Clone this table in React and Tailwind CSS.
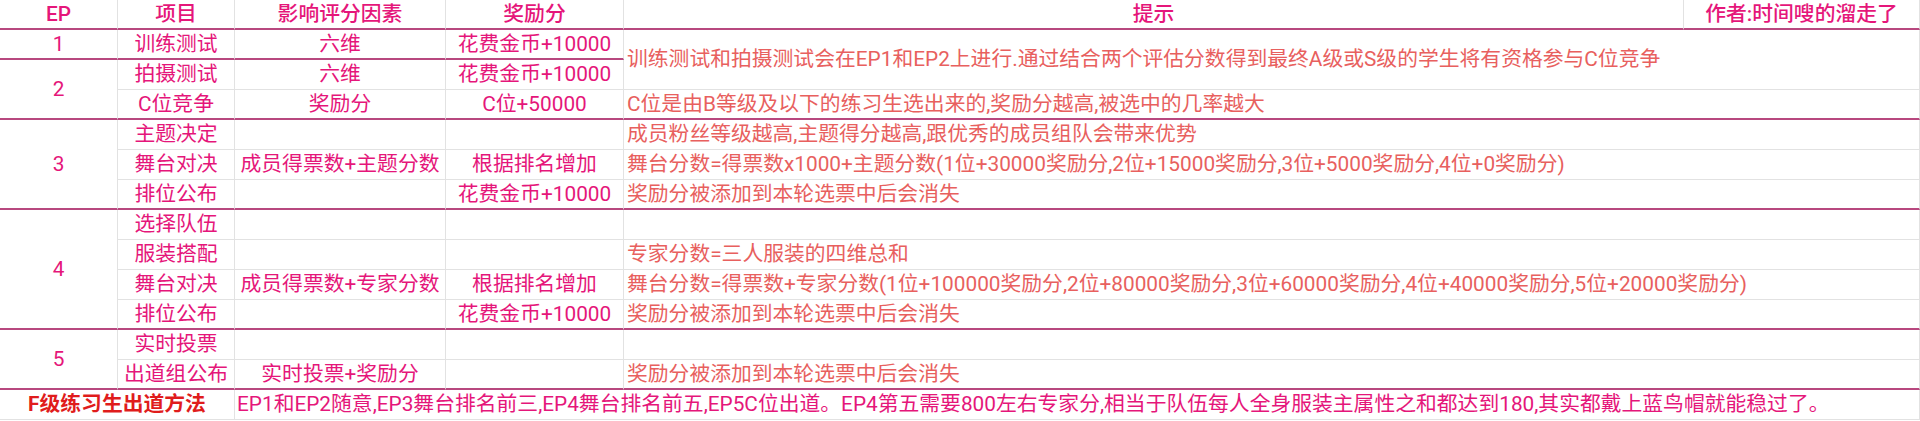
import React from "react";
import clsx from "clsx";

// 颜色
const PINK = "text-[#e5167a]";
const SALMON = "text-[#e8605e]";
const THICK = "border-b-2 border-b-[#b8487f]";

function Cell({ className, children }) {
  return (
    <div
      className={clsx(
        "flex items-center justify-center whitespace-nowrap border-r border-b border-[#e2e2e2] leading-none",
        className
      )}
    >
      {children}
    </div>
  );
}

// 提示列：左对齐，跨到最后一列
function Hint({ className, children }) {
  return (
    <Cell className={clsx("col-start-5 col-span-2 justify-start pl-[3px]", SALMON, className)}>
      {children}
    </Cell>
  );
}

export default function App() {
  return (
    <div className="w-[1920px] h-[421px] bg-white overflow-hidden font-[Roboto,'Noto_Sans_CJK_SC',sans-serif] text-[20.8px]">
      <div className={clsx("grid grid-cols-[118px_117px_211px_178px_1060px_236px] grid-rows-[repeat(14,30px)]", PINK)}>
        {/* 表头 */}
        <Cell className={clsx("col-start-1 row-start-1 font-medium", THICK)}>EP</Cell>
        <Cell className={clsx("col-start-2 row-start-1 font-medium", THICK)}>项目</Cell>
        <Cell className={clsx("col-start-3 row-start-1 font-medium", THICK)}>影响评分因素</Cell>
        <Cell className={clsx("col-start-4 row-start-1 font-medium", THICK)}>奖励分</Cell>
        <Cell className={clsx("col-start-5 row-start-1 font-medium", THICK)}>提示</Cell>
        <Cell className={clsx("col-start-6 row-start-1 font-medium", THICK)}>作者:时间嗖的溜走了</Cell>

        {/* EP1 */}
        <Cell className={clsx("col-start-1 row-start-2", THICK)}>1</Cell>
        <Cell className={clsx("col-start-2 row-start-2", THICK)}>训练测试</Cell>
        <Cell className={clsx("col-start-3 row-start-2", THICK)}>六维</Cell>
        <Cell className={clsx("col-start-4 row-start-2", THICK)}>花费金币+10000</Cell>
        <Hint className="row-start-2 row-span-2">
          训练测试和拍摄测试会在EP1和EP2上进行.通过结合两个评估分数得到最终A级或S级的学生将有资格参与C位竞争
        </Hint>

        {/* EP2 */}
        <Cell className={clsx("col-start-1 row-start-3 row-span-2", THICK)}>2</Cell>
        <Cell className="col-start-2 row-start-3">拍摄测试</Cell>
        <Cell className="col-start-3 row-start-3">六维</Cell>
        <Cell className="col-start-4 row-start-3">花费金币+10000</Cell>
        <Cell className={clsx("col-start-2 row-start-4", THICK)}>C位竞争</Cell>
        <Cell className={clsx("col-start-3 row-start-4", THICK)}>奖励分</Cell>
        <Cell className={clsx("col-start-4 row-start-4", THICK)}>C位+50000</Cell>
        <Hint className={clsx("row-start-4", THICK)}>
          C位是由B等级及以下的练习生选出来的,奖励分越高,被选中的几率越大
        </Hint>

        {/* EP3 */}
        <Cell className={clsx("col-start-1 row-start-5 row-span-3", THICK)}>3</Cell>
        <Cell className="col-start-2 row-start-5">主题决定</Cell>
        <Cell className="col-start-3 row-start-5" />
        <Cell className="col-start-4 row-start-5" />
        <Hint className="row-start-5">成员粉丝等级越高,主题得分越高,跟优秀的成员组队会带来优势</Hint>
        <Cell className="col-start-2 row-start-6">舞台对决</Cell>
        <Cell className="col-start-3 row-start-6">成员得票数+主题分数</Cell>
        <Cell className="col-start-4 row-start-6">根据排名增加</Cell>
        <Hint className="row-start-6">
          舞台分数=得票数x1000+主题分数(1位+30000奖励分,2位+15000奖励分,3位+5000奖励分,4位+0奖励分)
        </Hint>
        <Cell className={clsx("col-start-2 row-start-7", THICK)}>排位公布</Cell>
        <Cell className={clsx("col-start-3 row-start-7", THICK)} />
        <Cell className={clsx("col-start-4 row-start-7", THICK)}>花费金币+10000</Cell>
        <Hint className={clsx("row-start-7", THICK)}>奖励分被添加到本轮选票中后会消失</Hint>

        {/* EP4 */}
        <Cell className={clsx("col-start-1 row-start-8 row-span-4", THICK)}>4</Cell>
        <Cell className="col-start-2 row-start-8">选择队伍</Cell>
        <Cell className="col-start-3 row-start-8" />
        <Cell className="col-start-4 row-start-8" />
        <Hint className="row-start-8" />
        <Cell className="col-start-2 row-start-9">服装搭配</Cell>
        <Cell className="col-start-3 row-start-9" />
        <Cell className="col-start-4 row-start-9" />
        <Hint className="row-start-9">专家分数=三人服装的四维总和</Hint>
        <Cell className="col-start-2 row-start-10">舞台对决</Cell>
        <Cell className="col-start-3 row-start-10">成员得票数+专家分数</Cell>
        <Cell className="col-start-4 row-start-10">根据排名增加</Cell>
        <Hint className="row-start-10">
          舞台分数=得票数+专家分数(1位+100000奖励分,2位+80000奖励分,3位+60000奖励分,4位+40000奖励分,5位+20000奖励分)
        </Hint>
        <Cell className={clsx("col-start-2 row-start-11", THICK)}>排位公布</Cell>
        <Cell className={clsx("col-start-3 row-start-11", THICK)} />
        <Cell className={clsx("col-start-4 row-start-11", THICK)}>花费金币+10000</Cell>
        <Hint className={clsx("row-start-11", THICK)}>奖励分被添加到本轮选票中后会消失</Hint>

        {/* EP5 */}
        <Cell className={clsx("col-start-1 row-start-12 row-span-2", THICK)}>5</Cell>
        <Cell className="col-start-2 row-start-12">实时投票</Cell>
        <Cell className="col-start-3 row-start-12" />
        <Cell className="col-start-4 row-start-12" />
        <Hint className="row-start-12" />
        <Cell className={clsx("col-start-2 row-start-13", THICK)}>出道组公布</Cell>
        <Cell className={clsx("col-start-3 row-start-13", THICK)}>实时投票+奖励分</Cell>
        <Cell className={clsx("col-start-4 row-start-13", THICK)} />
        <Hint className={clsx("row-start-13", THICK)}>奖励分被添加到本轮选票中后会消失</Hint>

        {/* F级 */}
        <Cell className="col-start-1 col-span-2 row-start-14 font-bold text-[#e01c1c]">F级练习生出道方法</Cell>
        <Cell className="col-start-3 col-span-4 row-start-14 justify-start pl-[2px]">
          EP1和EP2随意,EP3舞台排名前三,EP4舞台排名前五,EP5C位出道。EP4第五需要800左右专家分,相当于队伍每人全身服装主属性之和都达到180,其实都戴上蓝鸟帽就能稳过了。
        </Cell>
      </div>
    </div>
  );
}
